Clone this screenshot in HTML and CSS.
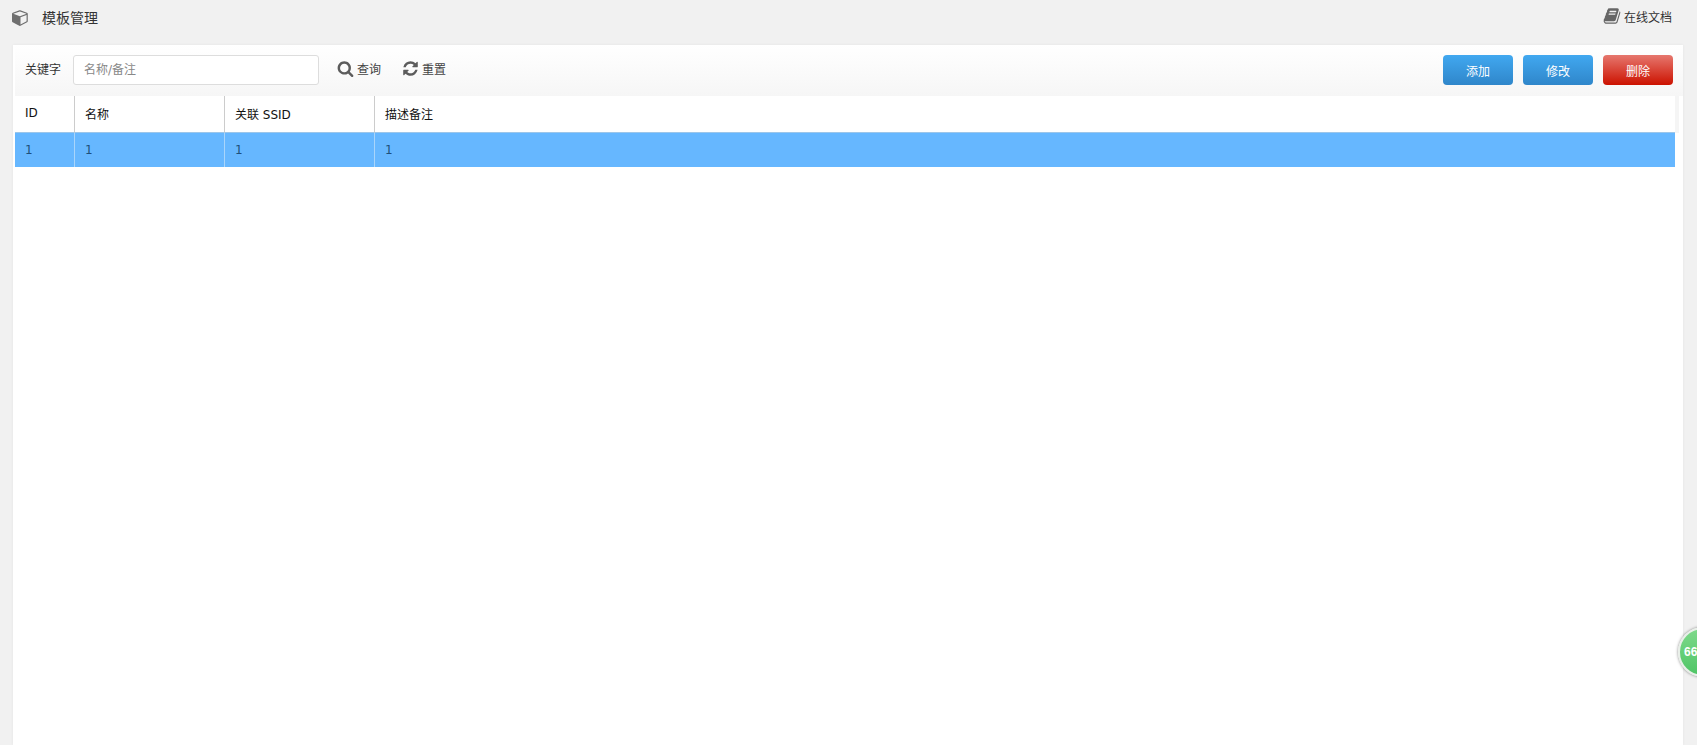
FILE: index.html
```html
<!DOCTYPE html>
<html>
  <head>
    <title>模板管理</title>
    <link rel="stylesheet" href="styles.css">
  </head>
  <body>
    <div class="top-bar">
      <div class="page-title">
        <svg class="cube-icon" viewBox="0 0 1792 1792"><path d="M896 1629l640-349v-636l-640 233v752zm-64-865l698-254-698-254-698 254zm832-252v768q0 35-18 65t-49 47l-704 384q-28 16-61 16t-61-16l-704-384q-31-17-49-47t-18-65v-768q0-40 23-73t61-47l704-256q22-8 44-8t44 8l704 256q38 14 61 47t23 73z"/></svg>
        <span>模板管理</span>
      </div>
      <a class="doc-link">
        <svg class="book-icon" viewBox="0 0 1792 1792"><path d="M1703 478q40 57 18 129l-275 906q-19 64-76.500 107.500t-122.500 43.500h-923q-77 0-148.500-53.500t-99.500-131.500q-24-67-2-127 0-4 3-27t4-37q1-8-3-21.500t-3-19.500q2-11 8-21t16.500-23.500 16.500-23.500q23-38 45-91.500t30-91.500q3-10 .5-30t-.5-28q3-11 17-28t17-23q21-36 42-92t25-90q1-9-2.500-32t.5-28q4-13 22-30.500t22-22.500q19-26 42.500-84.500t27.500-96.500q1-8-3-25.500t-2-26.500q2-8 9-18t18-23 17-21q8-12 16.500-30.500t15-35 16-36 19.500-32 26.500-23.500 36-11.500 47.500 5.500l-1 3q38-9 51-9h761q74 0 114 56t18 130l-274 906q-36 119-71.500 153.500t-128.500 34.500h-869q-27 0-38 15-11 16-1 43 24 70 144 70h923q29 0 56-15.500t35-41.500l300-987q7-22 5-57 38 15 59 43zm-1064 2q-4 13 2 22.500t20 9.500h608q13 0 25.500-9.500t16.500-22.500l21-64q4-13-2-22.500t-20-9.500h-608q-13 0-25.500 9.500t-16.500 22.500zm-83 256q-4 13 2 22.500t20 9.500h608q13 0 25.500-9.500t16.500-22.500l21-64q4-13-2-22.500t-20-9.500h-608q-13 0-25.500 9.500t-16.500 22.500z"/></svg>
        <span>在线文档</span>
      </a>
    </div>

    <div class="card">
      <form class="toolbar">
        <label class="search-label" for="keyword">关键字</label>
        <input class="search-input" type="text" id="keyword" placeholder="名称/备注" />
        <a class="tool-link first">
          <svg class="tool-icon" viewBox="0 0 1792 1792"><path d="M1216 832q0-185-131.500-316.500t-316.500-131.500-316.500 131.500-131.500 316.500 131.500 316.500 316.500 131.500 316.500-131.500 131.500-316.500zm512 832q0 52-38 90t-90 38q-54 0-90-38l-343-342q-179 124-399 124-143 0-273.500-55.500t-225-150-150-225-55.500-273.500 55.500-273.500 150-225 225-150 273.500-55.500 273.500 55.500 225 150 150 225 55.500 273.500q0 220-124 399l343 343q37 37 37 90z"/></svg>
          <span>查询</span>
        </a>
        <a class="tool-link">
          <svg class="tool-icon" viewBox="0 0 1792 1792"><path d="M1639 1056q0 5-1 7-64 268-268 434.500t-478 166.500q-146 0-282.500-55t-243.500-157l-129 129q-19 19-45 19t-45-19-19-45v-448q0-26 19-45t45-19h448q26 0 45 19t19 45-19 45l-137 137q71 66 161 102t187 36q134 0 250-65t186-179q11-17 53-117 8-23 30-23h192q13 0 22.500 9.500t9.500 22.500zm25-800v448q0 26-19 45t-45 19h-448q-26 0-45-19t-19-45 19-45l138-138q-148-137-349-137-134 0-250 65t-186 179q-11 17-53 117-8 23-30 23h-199q-13 0-22.500-9.500t-9.500-22.500v-7q65-268 270-434.500t480-166.500q146 0 284 55.500t245 156.500l130-129q19-19 45-19t45 19 19 45z"/></svg>
          <span>重置</span>
        </a>
        <div class="actions">
          <button type="button" class="btn btn-blue">添加</button>
          <button type="button" class="btn btn-blue">修改</button>
          <button type="button" class="btn btn-red">删除</button>
        </div>
      </form>

      <table class="grid">
        <thead>
          <tr>
            <th class="col-id">ID</th>
            <th class="col-name">名称</th>
            <th class="col-ssid">关联 SSID</th>
            <th>描述备注</th>
            <th class="col-gutter"></th>
          </tr>
        </thead>
        <tbody>
          <tr class="selected">
            <td>1</td>
            <td>1</td>
            <td>1</td>
            <td>1</td>
            <td class="col-gutter"></td>
          </tr>
        </tbody>
      </table>
    </div>

    <div class="float-ball">66</div>
  </body>
</html>
```

FILE: styles.css
```css
* {
  box-sizing: border-box;
}

html,
body {
  height: 100%;
}

body {
  margin: 0;
  display: flex;
  flex-direction: column;
  overflow: hidden;
  background-color: #f1f1f1;
  color: #111;
  font-family: "DejaVu Sans", "Noto Sans CJK SC", sans-serif;
  font-size: 12px;
}

.top-bar {
  flex: none;
  height: 45px;
  display: flex;
  justify-content: space-between;
  padding: 7px 25px 0 12px;
}

.page-title {
  display: flex;
  align-items: center;
  height: 20px;
  font-size: 14px;
  color: #333;
}

.cube-icon {
  width: 17px;
  height: 17px;
  margin-right: 13px;
  fill: #6f6f6f;
}

.doc-link {
  display: flex;
  align-items: center;
  height: 18px;
  color: #333;
}

.book-icon {
  width: 18px;
  height: 18px;
  margin-right: 3px;
  fill: #666;
}

.card {
  flex: 1;
  display: flex;
  flex-direction: column;
  margin: 0 14px 0 13px;
  padding: 0 4px 0 2px;
  background-color: #fff;
  box-shadow: 0 0 3px rgba(0, 0, 0, 0.06);
}

.toolbar {
  flex: none;
  height: 51px;
  display: flex;
  align-items: center;
  padding: 0 10px 2px 10px;
  margin-right: -4px;
  background: linear-gradient(#fff, #f6f6f6);
}

.search-label {
  width: 48px;
  padding-bottom: 2px;
  color: #333;
}

.search-input {
  width: 246px;
  height: 30px;
  padding: 0 10px;
  border: 1px solid #ddd;
  border-radius: 3px;
  background-color: #fff;
  font-family: inherit;
  font-size: 12px;
}

.search-input::placeholder {
  color: #888;
}

.tool-link {
  display: flex;
  align-items: center;
  margin-left: 21px;
  padding-bottom: 2px;
  color: #444;
}

.tool-link.first {
  margin-left: 18px;
}

.tool-icon {
  width: 17px;
  height: 17px;
  margin-right: 3px;
  fill: #5c5c5c;
}

.actions {
  display: flex;
  gap: 10px;
  margin-left: auto;
}

.btn {
  width: 70px;
  height: 30px;
  padding: 1px 0 0;
  border: none;
  border-radius: 4px;
  color: #fff;
  font-family: inherit;
  font-size: 12px;
}

.btn-blue {
  background: linear-gradient(#41a8f0, #2f86ca);
}

.btn-red {
  background: linear-gradient(#e6776e, #cc1200);
}

.grid {
  width: 100%;
  table-layout: fixed;
  border-collapse: separate;
  border-spacing: 0;
}

.grid th,
.grid td {
  padding: 0 10px;
  text-align: left;
  font-weight: normal;
}

.grid th {
  height: 37px;
  padding-bottom: 2px;
  border-right: 1px solid #ccc;
  border-bottom: 1px solid #9cc6ea;
  color: #111;
}

.grid th:nth-last-child(2) {
  border-right: 0;
}

.grid td {
  height: 34px;
  border-right: 1px solid #a9d5fb;
  background-color: #66b7ff;
  color: #1d4f7c;
}

.grid td:nth-last-child(2) {
  border-right: 0;
}

.col-id {
  width: 60px;
}

.col-name,
.col-ssid {
  width: 150px;
}

.grid th.col-gutter {
  width: 4px;
  padding: 0;
  border: 0;
  background-color: #f5f5f5;
}

.grid td.col-gutter {
  padding: 0;
  border: 0;
  background-color: #fff;
}

.float-ball {
  position: absolute;
  left: 1678px;
  top: 627px;
  width: 50px;
  height: 50px;
  padding-left: 4px;
  border: 2px solid #e8efe8;
  border-radius: 50%;
  background: linear-gradient(#7ed98a, #4fc566);
  box-shadow: 0 0 3px rgba(0, 0, 0, 0.5);
  color: #fff;
  font-family: "Liberation Sans", sans-serif;
  font-weight: bold;
  font-size: 12px;
  line-height: 46px;
}
```
